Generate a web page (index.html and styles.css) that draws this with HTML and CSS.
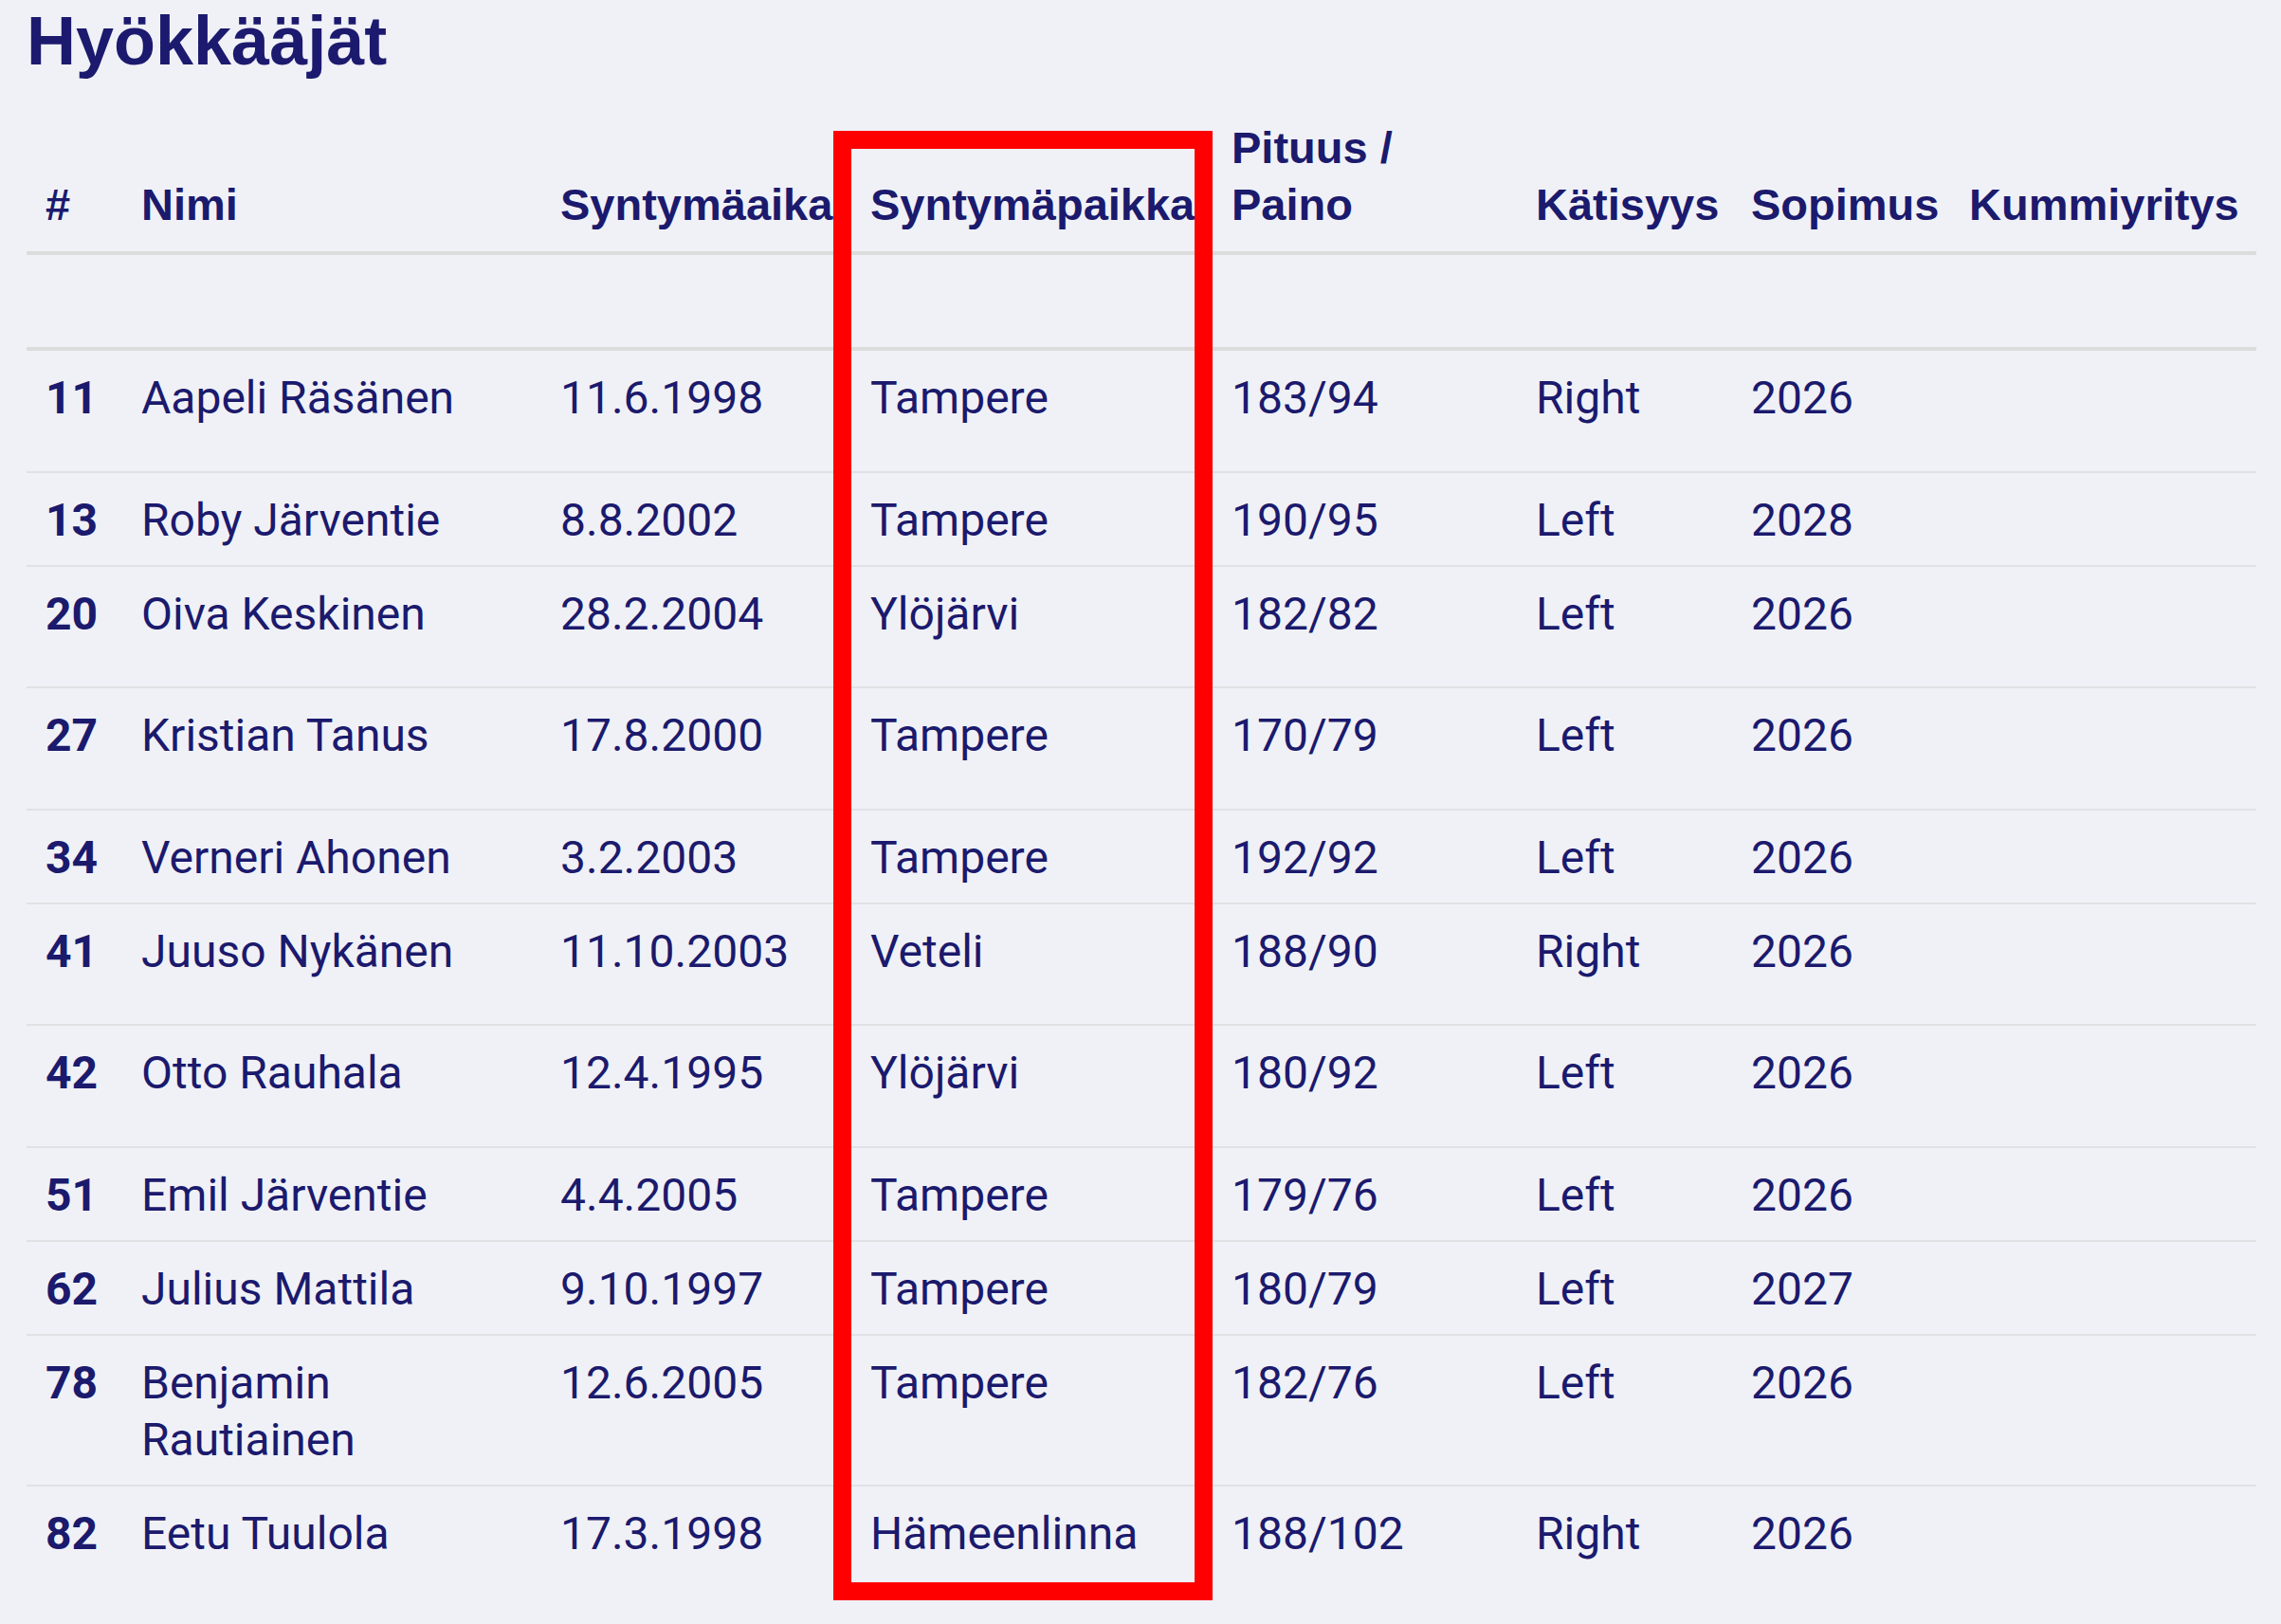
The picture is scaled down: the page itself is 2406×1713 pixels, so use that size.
FILE: index.html
```html
<!DOCTYPE html>
<html lang="fi">
<head>
<meta charset="utf-8">
<title>Hyökkääjät</title>
<link rel="stylesheet" href="styles.css">
</head>
<body>
<main class="page">
  <h1 class="title">Hyökkääjät</h1>
  <table class="roster">
    <colgroup>
      <col class="c-num"><col class="c-name"><col class="c-born"><col class="c-place"><col class="c-size"><col class="c-hand"><col class="c-contract"><col class="c-sponsor">
    </colgroup>
    <thead>
      <tr>
        <th>#</th><th>Nimi</th><th>Syntymäaika</th><th>Syntymäpaikka</th><th>Pituus / Paino</th><th>Kätisyys</th><th>Sopimus</th><th>Kummiyritys</th>
      </tr>
    </thead>
    <tbody>
      <tr class="spacer"><td></td><td></td><td></td><td></td><td></td><td></td><td></td><td></td></tr>
      <tr class="tall"><td class="num">11</td><td>Aapeli Räsänen</td><td>11.6.1998</td><td>Tampere</td><td>183/94</td><td>Right</td><td>2026</td><td></td></tr>
      <tr><td class="num">13</td><td>Roby Järventie</td><td>8.8.2002</td><td>Tampere</td><td>190/95</td><td>Left</td><td>2028</td><td></td></tr>
      <tr class="tall"><td class="num">20</td><td>Oiva Keskinen</td><td>28.2.2004</td><td>Ylöjärvi</td><td>182/82</td><td>Left</td><td>2026</td><td></td></tr>
      <tr class="tall"><td class="num">27</td><td>Kristian Tanus</td><td>17.8.2000</td><td>Tampere</td><td>170/79</td><td>Left</td><td>2026</td><td></td></tr>
      <tr><td class="num">34</td><td>Verneri Ahonen</td><td>3.2.2003</td><td>Tampere</td><td>192/92</td><td>Left</td><td>2026</td><td></td></tr>
      <tr class="tall"><td class="num">41</td><td>Juuso Nykänen</td><td>11.10.2003</td><td>Veteli</td><td>188/90</td><td>Right</td><td>2026</td><td></td></tr>
      <tr class="tall"><td class="num">42</td><td>Otto Rauhala</td><td>12.4.1995</td><td>Ylöjärvi</td><td>180/92</td><td>Left</td><td>2026</td><td></td></tr>
      <tr><td class="num">51</td><td>Emil Järventie</td><td>4.4.2005</td><td>Tampere</td><td>179/76</td><td>Left</td><td>2026</td><td></td></tr>
      <tr><td class="num">62</td><td>Julius Mattila</td><td>9.10.1997</td><td>Tampere</td><td>180/79</td><td>Left</td><td>2027</td><td></td></tr>
      <tr><td class="num">78</td><td>Benjamin Rautiainen</td><td>12.6.2005</td><td>Tampere</td><td>182/76</td><td>Left</td><td>2026</td><td></td></tr>
      <tr class="last"><td class="num">82</td><td>Eetu Tuulola</td><td>17.3.1998</td><td>Hämeenlinna</td><td>188/102</td><td>Right</td><td>2026</td><td></td></tr>
    </tbody>
  </table>
  <div class="highlight" aria-hidden="true"></div>
</main>
</body>
</html>
```

FILE: styles.css
```css
html, body {
  margin: 0;
  padding: 0;
  background: #f0f1f7;
}

.page {
  position: relative;
  min-height: 1713px;
  box-sizing: border-box;
  padding: 0 26px 0 28px;
  color: #1b1a6d;
}

.title {
  margin: 0 0 19px 0;
  font-family: "Liberation Sans", Arial, sans-serif;
  font-weight: 700;
  font-size: 72px;
  line-height: 86px;
  color: #1c1a6e;
}

.roster {
  width: 100%;
  table-layout: fixed;
  border-collapse: collapse;
  font-family: Roboto, "Noto Sans", sans-serif;
  font-size: 48px;
  line-height: 60px;
  color: #1b1a6d;
}

.c-num { width: 101px; }
.c-name { width: 442px; }
.c-born { width: 327px; }
.c-place { width: 381px; }
.c-size { width: 321px; }
.c-hand { width: 227px; }
.c-contract { width: 230px; }
.c-sponsor { width: 323px; }

.roster th {
  font-family: "Liberation Sans", Arial, sans-serif;
  font-weight: 700;
  font-size: 47px;
  line-height: 60px;
  text-align: left;
  vertical-align: bottom;
  padding: 21px 20px 19px 20px;
  border-bottom: 4px solid #dcdcdc;
}

.roster td {
  text-align: left;
  vertical-align: top;
  padding: 20px 20px 17px 20px;
  border-bottom: 2px solid #e1e1e4;
  font-weight: 400;
}

.roster .spacer td {
  padding: 0;
  height: 97px;
  border-bottom: 4px solid #dcdcdc;
}

.roster .tall td {
  padding-bottom: 46.5px;
}

.roster .last td {
  border-bottom: 0;
}

.roster td.num {
  font-weight: 700;
}

.highlight {
  position: absolute;
  left: 879px;
  top: 138px;
  width: 400px;
  height: 1550px;
  box-sizing: border-box;
  border: 19px solid #ff0000;
  pointer-events: none;
}
```
